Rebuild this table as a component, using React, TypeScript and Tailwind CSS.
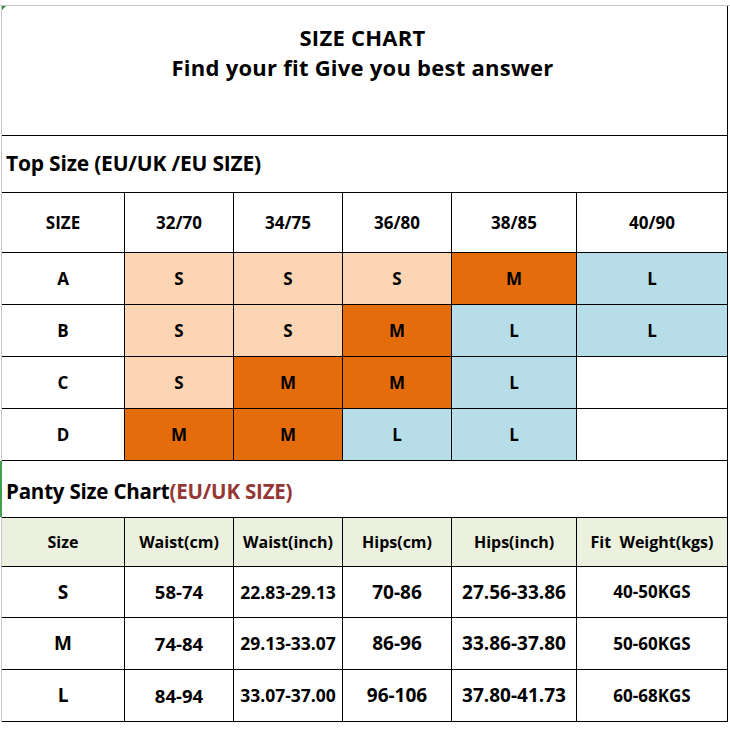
import React from 'react';

const cols = 'grid grid-cols-[123px_109px_109px_109px_125px_150px]';

const topSizes = ['32/70', '34/75', '36/80', '38/85', '40/90'];

const topRows: { cup: string; fits: string[] }[] = [
    { cup: 'A', fits: ['S', 'S', 'S', 'M', 'L'] },
    { cup: 'B', fits: ['S', 'S', 'M', 'L', 'L'] },
    { cup: 'C', fits: ['S', 'M', 'M', 'L', ''] },
    { cup: 'D', fits: ['M', 'M', 'L', 'L', ''] },
];

const fitColor: Record<string, string> = {
    S: 'bg-[#fcd5b4]',
    M: 'bg-[#e46c0a]',
    L: 'bg-[#b7dee8]',
    '': 'bg-white',
};

const pantyHead = ['Size', 'Waist(cm)', 'Waist(inch)', 'Hips(cm)', 'Hips(inch)', 'Fit  Weight(kgs)'];

const pantyRows = [
    ['S', '58-74', '22.83-29.13', '70-86', '27.56-33.86', '40-50KGS'],
    ['M', '74-84', '29.13-33.07', '86-96', '33.86-37.80', '50-60KGS'],
    ['L', '84-94', '33.07-37.00', '96-106', '37.80-41.73', '60-68KGS'],
];

// per-column text size for the panty rows
const pantySize = ['text-[19px]', 'text-[18.5px]', 'text-[17.5px]', 'text-[19px]', 'text-[19px]', 'text-[17px]'];

function Cell({ children, className = '', last = false }: { children?: React.ReactNode; className?: string; last?: boolean }) {
    return (
        <div className={`flex items-center justify-center ${last ? '' : 'border-r border-black'} ${className}`}>
            {children}
        </div>
    );
}

export default function App() {
    return (
        <div className="w-[730px] h-[730px] bg-white text-black font-['Open_Sans',sans-serif] font-bold">
            <div className="mt-[5px] border-t border-[#c6c6c6]">
                <div className="relative ml-px w-[727px] border-l border-[#c6c6c6] border-r border-r-black">
                    {/* green marker in corner */}
                    <div className="absolute left-0 top-0 w-0 h-0 border-t-[4px] border-r-[4px] border-t-[#2e8b3a] border-r-transparent" />

                    {/* Heading */}
                    <div className="h-[130px] border-b border-black flex flex-col items-center pt-[16px] text-[22px] leading-[30px] tracking-[0.25px] pr-[4px]">
                        <div>SIZE CHART</div>
                        <div>Find your fit Give you best answer</div>
                    </div>

                    {/* Top size */}
                    <div className="h-[57px] border-b border-black flex items-center pl-[4px] text-[21px] tracking-[-0.2px]">
                        Top Size (EU/UK /EU SIZE)
                    </div>
                    <div className={`${cols} h-[60px] border-b border-black text-[17px]`}>
                        <Cell>SIZE</Cell>
                        {topSizes.map((s, i) => (
                            <Cell key={s} last={i === topSizes.length - 1}>{s}</Cell>
                        ))}
                    </div>
                    {topRows.map((row) => (
                        <div key={row.cup} className={`${cols} h-[52px] border-b border-black text-[17px]`}>
                            <Cell>{row.cup}</Cell>
                            {row.fits.map((f, i) => (
                                <Cell key={i} last={i === row.fits.length - 1} className={fitColor[f]}>{f}</Cell>
                            ))}
                        </div>
                    ))}

                    {/* Panty size */}
                    <div className="relative h-[57px] border-b border-black flex items-center pl-[4px] pt-[4px] text-[20.5px] tracking-[-0.2px]">
                        <div className="absolute -left-[2px] top-0 bottom-0 w-[2px] bg-[#3fa34d]" />
                        <span>Panty Size Chart</span>
                        <span className="text-[#953735]">(EU/UK SIZE)</span>
                    </div>
                    <div className={`${cols} h-[49px] border-b border-black bg-[#ebf1de] text-[16px]`}>
                        {pantyHead.map((h, i) => (
                            <Cell key={h} last={i === pantyHead.length - 1} className="whitespace-pre">{h}</Cell>
                        ))}
                    </div>
                    {pantyRows.map((row, r) => (
                        <div key={row[0]} className={`${cols} ${r === 0 ? 'h-[51px]' : 'h-[52px]'} border-b border-black`}>
                            {row.map((v, i) => (
                                <Cell key={i} last={i === row.length - 1} className={pantySize[i]}>{v}</Cell>
                            ))}
                        </div>
                    ))}
                </div>
            </div>
        </div>
    );
}
